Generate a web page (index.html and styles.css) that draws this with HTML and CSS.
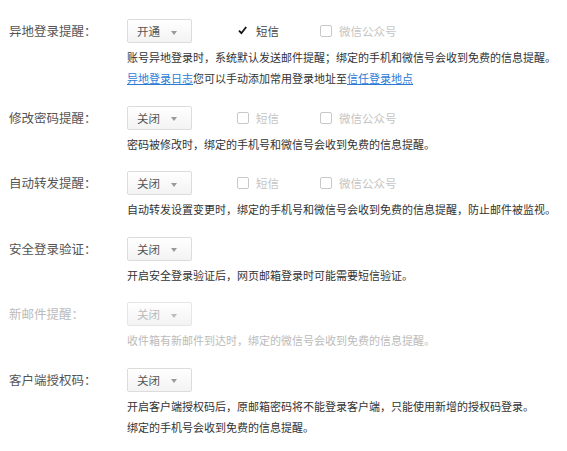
FILE: index.html
```html
<!DOCTYPE html>
<html lang="zh-CN">
<head>
    <meta charset="UTF-8">
    <title>提醒设置</title>
    <link rel="stylesheet" href="styles.css">
</head>
<body>

    <div class="settings">

        <div class="row">
            <div class="label">异地登录提醒：</div>
            <div class="body">
                <div class="controls">
                    <div class="select">开通 <span class="caret"></span></div>
                    <div class="options">
                        <label class="option"><span class="box checked"><svg width="11" height="11" viewBox="0 0 11 11"><path d="M2 5.6 L4.4 8.2 L9.2 2" fill="none" stroke="#111" stroke-width="1.8"/></svg></span>短信</label>
                        <label class="option off"><span class="box"></span>微信公众号</label>
                    </div>
                </div>
                <p class="desc">账号异地登录时，系统默认发送邮件提醒；绑定的手机和微信号会收到免费的信息提醒。<br><a href="#">异地登录日志</a>您可以手动添加常用登录地址至<a href="#">信任登录地点</a></p>
            </div>
        </div>

        <div class="row">
            <div class="label">修改密码提醒：</div>
            <div class="body">
                <div class="controls">
                    <div class="select">关闭 <span class="caret"></span></div>
                    <div class="options">
                        <label class="option off"><span class="box"></span>短信</label>
                        <label class="option off"><span class="box"></span>微信公众号</label>
                    </div>
                </div>
                <p class="desc">密码被修改时，绑定的手机号和微信号会收到免费的信息提醒。</p>
            </div>
        </div>

        <div class="row">
            <div class="label">自动转发提醒：</div>
            <div class="body">
                <div class="controls">
                    <div class="select">关闭 <span class="caret"></span></div>
                    <div class="options">
                        <label class="option off"><span class="box"></span>短信</label>
                        <label class="option off"><span class="box"></span>微信公众号</label>
                    </div>
                </div>
                <p class="desc">自动转发设置变更时，绑定的手机号和微信号会收到免费的信息提醒，防止邮件被监视。</p>
            </div>
        </div>

        <div class="row">
            <div class="label">安全登录验证：</div>
            <div class="body">
                <div class="controls">
                    <div class="select">关闭 <span class="caret"></span></div>
                </div>
                <p class="desc">开启安全登录验证后，网页邮箱登录时可能需要短信验证。</p>
            </div>
        </div>

        <div class="row disabled">
            <div class="label">新邮件提醒：</div>
            <div class="body">
                <div class="controls">
                    <div class="select">关闭 <span class="caret"></span></div>
                </div>
                <p class="desc">收件箱有新邮件到达时，绑定的微信号会收到免费的信息提醒。</p>
            </div>
        </div>

        <div class="row">
            <div class="label">客户端授权码：</div>
            <div class="body">
                <div class="controls">
                    <div class="select">关闭 <span class="caret"></span></div>
                </div>
                <p class="desc">开启客户端授权码后，原邮箱密码将不能登录客户端，只能使用新增的授权码登录。<br>绑定的手机号会收到免费的信息提醒。</p>
            </div>
        </div>

    </div>

</body>
</html>
```

FILE: styles.css
```css
body {
    margin: 0;
    background-color: #fff;
    font-family: "Noto Sans CJK SC", "Liberation Sans", sans-serif;
    color: #333;
}
.settings {
    padding-top: 19px;
}
.row {
    display: flex;
    margin-bottom: 16.5px;
}
.label {
    width: 118px;
    padding-left: 9px;
    font-size: 12.5px;
    line-height: 24px;
    color: #555;
}
.body {
    flex: 1;
}
.controls {
    display: flex;
    align-items: center;
    height: 24px;
}
.select {
    box-sizing: border-box;
    width: 65px;
    height: 24px;
    padding-left: 9px;
    border: 1px solid #dcdcdc;
    border-radius: 2px;
    background: linear-gradient(#fff, #f3f3f3);
    font-size: 11.5px;
    line-height: 22px;
    color: #555;
}
.caret {
    display: inline-block;
    margin-left: 8px;
    vertical-align: middle;
    border-left: 3.5px solid transparent;
    border-right: 3.5px solid transparent;
    border-top: 4px solid #999;
}
.options {
    display: flex;
    margin-left: 45px;
}
.option {
    display: flex;
    align-items: center;
    width: 83px;
    font-size: 11.5px;
    color: #444;
}
.option.off {
    color: #c4c4c4;
}
.box {
    box-sizing: border-box;
    display: inline-block;
    width: 12px;
    height: 12px;
    margin-right: 7px;
    border: 1px solid #c8c8c8;
    border-radius: 2px;
    background-color: #fff;
}
.box.checked {
    border-color: #fff;
}
.box svg {
    display: block;
    margin: -1px;
}
.desc {
    margin: 4px 0 0;
    font-size: 11px;
    line-height: 21px;
    color: #333;
}
.desc a {
    color: #2b7bd6;
    text-decoration: underline;
}
.disabled .label,
.disabled .desc,
.disabled .select {
    color: #bbb;
}
.disabled .select {
    border-color: #e6e6e6;
}
.disabled .caret {
    border-top-color: #bbb;
}
```
